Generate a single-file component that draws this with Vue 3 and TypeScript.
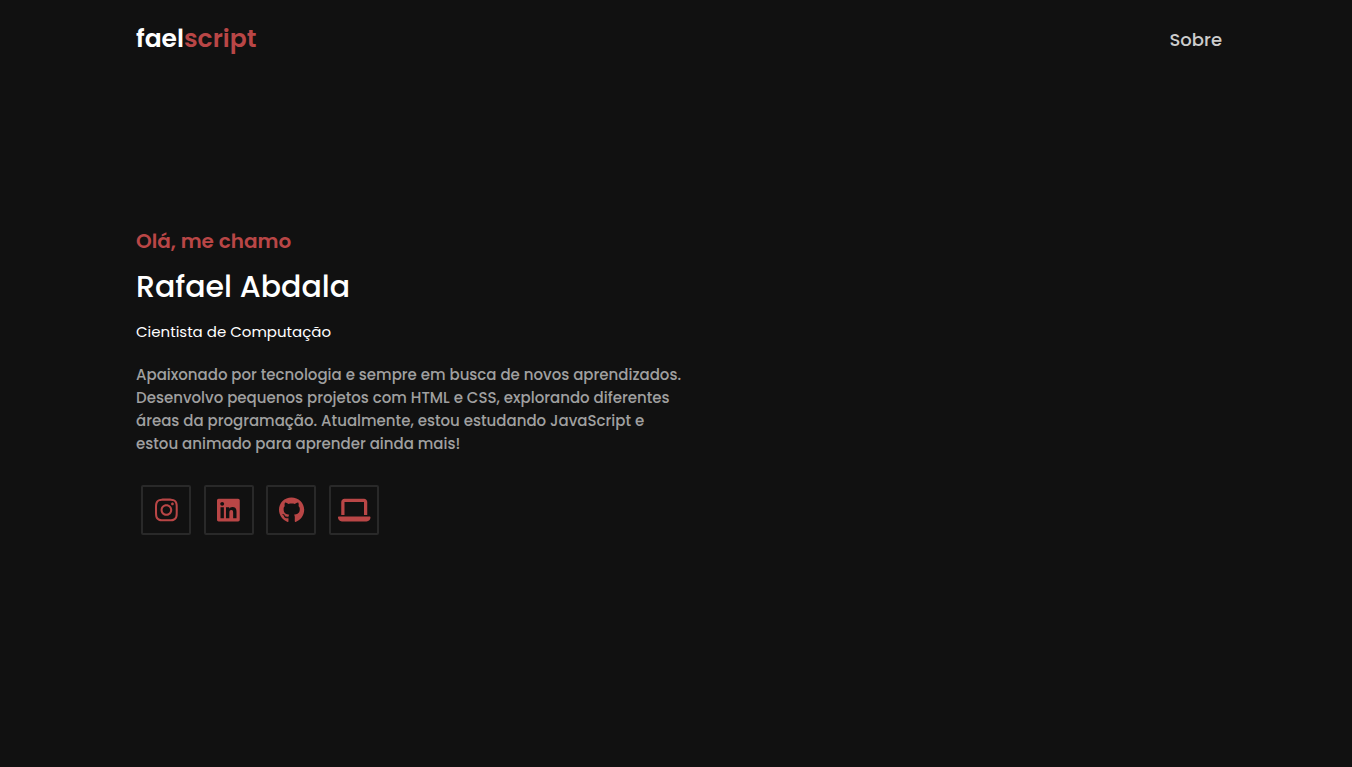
<script setup lang="ts">
interface Social {
  label: string
  viewBox: string
  path: string
}

const socials: Social[] = [
  {
    label: 'Instagram',
    viewBox: '0 0 448 512',
    path: 'M224.1 141c-63.6 0-114.9 51.3-114.9 114.9s51.3 114.9 114.9 114.9S339 319.5 339 255.9 287.7 141 224.1 141zm0 189.6c-41.1 0-74.7-33.5-74.7-74.7s33.5-74.7 74.7-74.7 74.7 33.5 74.7 74.7-33.6 74.7-74.7 74.7zm146.4-194.3c0 14.9-12 26.8-26.8 26.8-14.9 0-26.8-12-26.8-26.8s12-26.8 26.8-26.8 26.8 12 26.8 26.8zm76.1 27.2c-1.7-35.9-9.9-67.7-36.2-93.9-26.2-26.2-58-34.4-93.9-36.2-37-2.1-147.9-2.1-184.9 0-35.8 1.7-67.6 9.9-93.9 36.1s-34.4 58-36.2 93.9c-2.1 37-2.1 147.9 0 184.9 1.7 35.9 9.9 67.7 36.2 93.9s58 34.4 93.9 36.2c37 2.1 147.9 2.1 184.9 0 35.9-1.7 67.7-9.9 93.9-36.2 26.2-26.2 34.4-58 36.2-93.9 2.1-37 2.1-147.8 0-184.8zM398.8 388c-7.8 19.6-22.9 34.7-42.6 42.6-29.5 11.7-99.5 9-132.1 9s-102.7 2.6-132.1-9c-19.6-7.8-34.7-22.9-42.6-42.6-11.7-29.5-9-99.5-9-132.1s-2.6-102.7 9-132.1c7.8-19.6 22.9-34.7 42.6-42.6 29.5-11.7 99.5-9 132.1-9s102.7-2.6 132.1 9c19.6 7.8 34.7 22.9 42.6 42.6 11.7 29.5 9 99.5 9 132.1s2.7 102.7-9 132.1z'
  },
  {
    label: 'LinkedIn',
    viewBox: '0 0 448 512',
    path: 'M416 32H31.9C14.3 32 0 46.5 0 64.3v383.4C0 465.5 14.3 480 31.9 480H416c17.6 0 32-14.5 32-32.3V64.3c0-17.8-14.4-32.3-32-32.3zM135.4 416H69V202.2h66.5V416zm-33.2-243c-21.3 0-38.5-17.3-38.5-38.5S80.9 96 102.2 96c21.2 0 38.5 17.3 38.5 38.5 0 21.3-17.2 38.5-38.5 38.5zm282.1 243h-66.4V312c0-24.8-.5-56.7-34.5-56.7-34.6 0-39.9 27-39.9 54.9V416h-66.4V202.2h63.7v29.2h.9c8.9-16.8 30.6-34.5 62.9-34.5 67.2 0 79.7 44.3 79.7 101.9V416z'
  },
  {
    label: 'GitHub',
    viewBox: '0 0 496 512',
    path: 'M165.9 397.4c0 2-2.3 3.6-5.2 3.6-3.3.3-5.6-1.3-5.6-3.6 0-2 2.3-3.6 5.2-3.6 3-.3 5.6 1.3 5.6 3.6zm-31.1-4.5c-.7 2 1.3 4.3 4.3 4.9 2.6 1 5.6 0 6.2-2s-1.3-4.3-4.3-5.2c-2.6-.7-5.5.3-6.2 2.3zm44.2-1.7c-2.9.7-4.9 2.6-4.6 4.9.3 2 2.9 3.3 5.9 2.6 2.9-.7 4.9-2.6 4.6-4.6-.3-1.9-3-3.2-5.9-2.9zM244.8 8C106.1 8 0 113.3 0 252c0 110.9 69.8 205.8 169.5 239.2 12.8 2.3 17.3-5.6 17.3-12.1 0-6.2-.3-40.4-.3-61.4 0 0-70 15-84.7-29.8 0 0-11.4-29.1-27.8-36.6 0 0-22.9-15.7 1.6-15.4 0 0 24.9 2 38.6 25.8 21.9 38.6 58.6 27.5 72.9 20.9 2.3-16 8.8-27.1 16-33.7-55.9-6.2-112.3-14.3-112.3-110.5 0-27.5 7.6-41.3 23.6-58.9-2.6-6.5-11.1-33.3 2.6-67.9 20.9-6.5 69 27 69 27 20-5.6 41.5-8.5 62.8-8.5s42.8 2.9 62.8 8.5c0 0 48.1-33.6 69-27 13.7 34.7 5.2 61.4 2.6 67.9 16 17.7 25.8 31.5 25.8 58.9 0 96.5-58.9 104.2-114.8 110.5 9.2 7.9 17 22.9 17 46.4 0 33.7-.3 75.4-.3 83.6 0 6.5 4.6 14.4 17.3 12.1C428.2 457.8 496 362.9 496 252 496 113.3 383.5 8 244.8 8zM97.2 352.9c-1.3 1-1 3.3.7 5.2 1.6 1.6 3.9 2.3 5.2 1 1.3-1 1-3.3-.7-5.2-1.6-1.6-3.9-2.3-5.2-1zm-10.8-8.1c-.7 1.3.3 2.9 2.3 3.9 1.6 1 3.6.7 4.3-.7.7-1.3-.3-2.9-2.3-3.9-2-.6-3.6-.3-4.3.7zm32.4 35.6c-1.6 1.3-1 4.3 1.3 6.2 2.3 2.3 5.2 2.6 6.5 1 1.3-1.3.7-4.3-1.3-6.2-2.2-2.3-5.2-2.6-6.5-1zm-11.4-14.7c-1.6 1-1.6 3.6 0 5.9 1.6 2.3 4.3 3.3 5.6 2.3 1.6-1.3 1.6-3.9 0-6.2-1.4-2.3-4-3.3-5.6-2z'
  },
  {
    label: 'Portfólio',
    viewBox: '0 0 640 512',
    path: 'M128 32C92.7 32 64 60.7 64 96V352h64V96H512V352h64V96c0-35.3-28.7-64-64-64H128zM19.2 384C8.6 384 0 392.6 0 403.2C0 445.6 34.4 480 76.8 480H563.2c42.4 0 76.8-34.4 76.8-76.8c0-10.6-8.6-19.2-19.2-19.2H19.2z'
  }
]
</script>

<template>
  <div class="page">
    <header class="header">
      <a class="logo" href="#">fael<span>script</span></a>
      <nav><a class="nav-link" href="#sobre">Sobre</a></nav>
    </header>
    <main class="hero">
      <p class="greeting">Olá, me chamo</p>
      <h1>Rafael Abdala</h1>
      <h2>Cientista de Computação</h2>
      <p class="bio">
        Apaixonado por tecnologia e sempre em busca de novos aprendizados.
        Desenvolvo pequenos projetos com HTML e CSS, explorando diferentes
        áreas da programação. Atualmente, estou estudando JavaScript e
        estou animado para aprender ainda mais!
      </p>
      <div class="socials">
        <a v-for="s in socials" :key="s.label" href="#" :aria-label="s.label">
          <svg :viewBox="s.viewBox" aria-hidden="true"><path :d="s.path" /></svg>
        </a>
      </div>
    </main>
  </div>
</template>

<style>
body {
  margin: 0;
  background: #111;
}
</style>

<style scoped>
.page {
  min-height: 100vh;
  box-sizing: border-box;
  background: #111;
  color: #fff;
  font-family: Poppins, Inter, 'Open Sans', sans-serif;
  font-weight: 500;
}

a {
  text-decoration: none;
}

.header {
  display: flex;
  align-items: center;
  justify-content: space-between;
  height: 78px;
  padding: 0 130px 0 136px;
}

.logo {
  color: #fff;
  font-size: 25px;
  font-weight: 600;
}

.logo span,
.greeting {
  color: #b94646;
}

.nav-link {
  color: #ccc;
  font-size: 18px;
}

.hero {
  padding: 148px 136px 0;
}

.greeting,
.bio,
h1,
h2 {
  margin: 0;
}

.greeting {
  font-size: 20px;
  font-weight: 600;
  line-height: 30px;
}

h1 {
  margin-top: 7px;
  font-size: 30px;
  font-weight: 500;
  line-height: 48px;
}

h2 {
  margin-top: 9px;
  font-size: 15px;
  font-weight: 400;
  line-height: 24px;
}

.bio {
  max-width: 550px;
  margin-top: 19px;
  color: #a0a0a0;
  font-size: 15px;
  line-height: 23px;
}

.socials {
  display: flex;
  justify-content: space-between;
  width: 238px;
  margin: 30px 5px 0;
}

.socials a {
  display: flex;
  align-items: center;
  justify-content: center;
  box-sizing: border-box;
  width: 50px;
  height: 50px;
  border: 2px solid #292929;
  border-radius: 2px;
}

.socials svg {
  height: 26px;
  overflow: visible;
  fill: #b94646;
}
</style>
